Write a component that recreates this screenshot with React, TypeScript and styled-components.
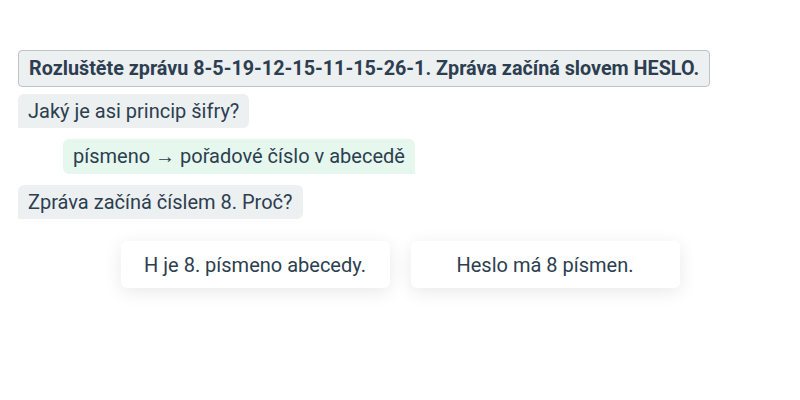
import styled, { createGlobalStyle } from "styled-components";

const Global = createGlobalStyle`
  body {
    margin: 0;
    background: #ffffff;
    font-family: Roboto, "Liberation Sans", sans-serif;
    color: #2c3e50;
  }
`;

const Page = styled.div`
  width: 800px;
  height: 400px;
  box-sizing: border-box;
  padding: 50px 18px 0;
  display: flex;
  flex-direction: column;
  align-items: flex-start;
`;

const Bubble = styled.div<{ $user?: boolean; $strong?: boolean }>`
  box-sizing: border-box;
  font-size: ${(p) => (p.$strong ? "19.75px" : "20px")};
  line-height: ${(p) => (p.$strong ? "25px" : "24px")};
  padding: ${(p) => (p.$user ? "5px 10px 6px" : "5px 10px")};
  font-weight: ${(p) => (p.$strong ? 700 : 400)};
  background: ${(p) => (p.$user ? "#e6f7ee" : "#ecf0f1")};
  border: ${(p) => (p.$strong ? "1px solid #bdc3c7" : "none")};
  border-radius: ${(p) => (p.$strong ? "4px" : p.$user ? "6px 6px 0 6px" : "6px 6px 6px 0")};
  margin-left: ${(p) => (p.$user ? "45px" : "0")};
  margin-bottom: ${(p) => (p.$strong ? "7px" : "11px")};
`;

const Choices = styled.div`
  align-self: stretch;
  display: flex;
  justify-content: center;
  gap: 21px;
  margin-top: 11px;
`;

const Choice = styled.button`
  width: 269px;
  height: 47px;
  border: none;
  border-radius: 6px;
  background: #ffffff;
  box-shadow: 0 4px 18px rgba(0, 0, 0, 0.09);
  font-family: inherit;
  font-size: 20px;
  color: #2c3e50;
  cursor: pointer;
`;

export default function App() {
  return (
    <Page>
      <Global />
      <Bubble $strong>Rozluštěte zprávu 8-5-19-12-15-11-15-26-1. Zpráva začíná slovem HESLO.</Bubble>
      <Bubble>Jaký je asi princip šifry?</Bubble>
      <Bubble $user>písmeno → pořadové číslo v abecedě</Bubble>
      <Bubble>Zpráva začíná číslem 8. Proč?</Bubble>
      <Choices>
        <Choice>H je 8. písmeno abecedy.</Choice>
        <Choice>Heslo má 8 písmen.</Choice>
      </Choices>
    </Page>
  );
}
